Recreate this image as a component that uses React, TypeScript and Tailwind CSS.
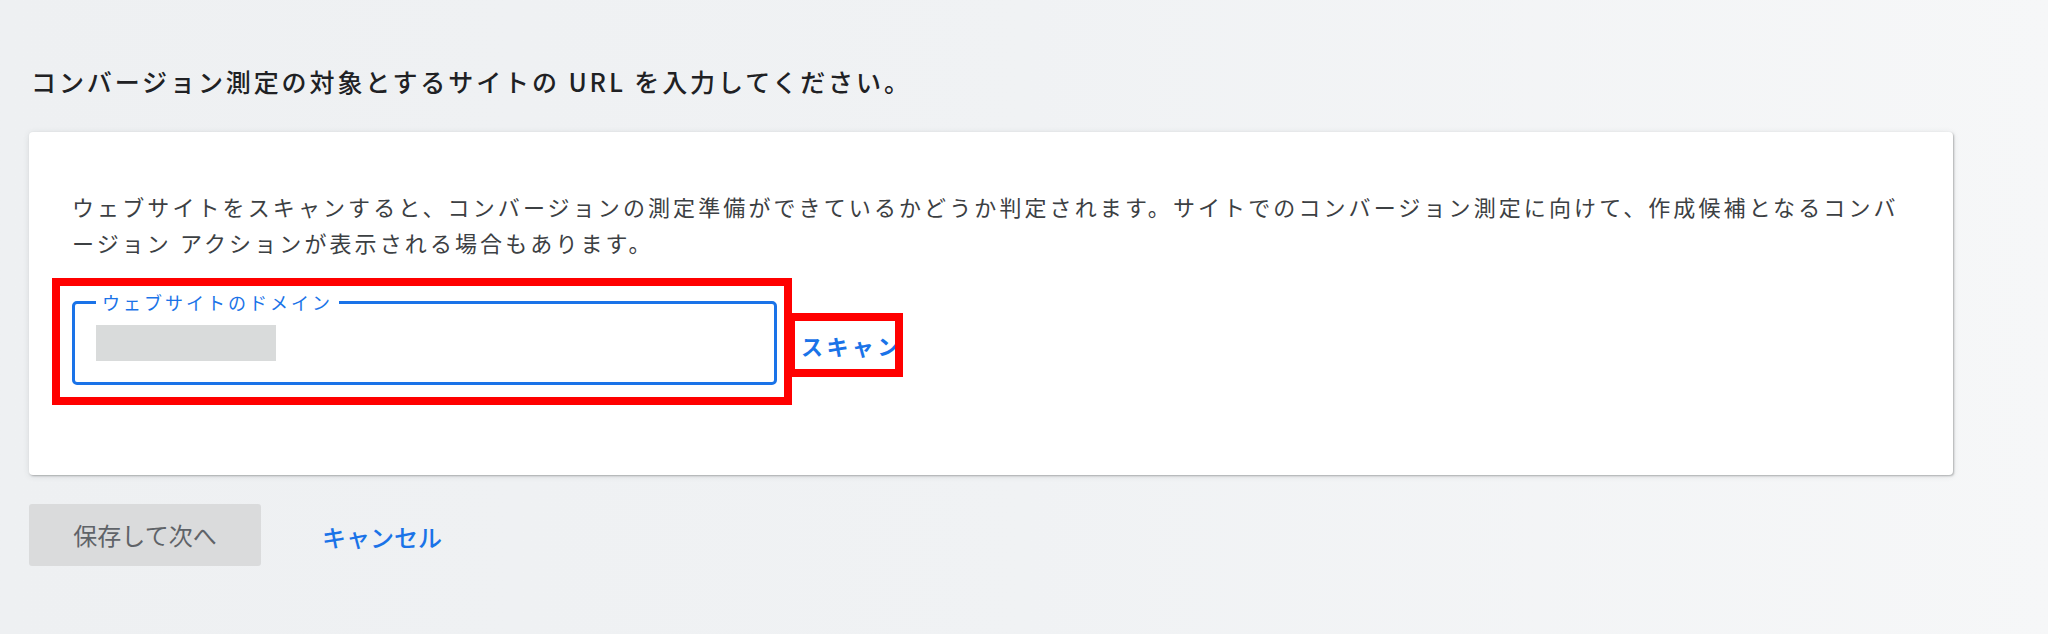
import React from "react";

export default function App() {
  return (
    <div className="w-[2048px] h-[634px] overflow-hidden bg-gradient-to-r from-[#eef0f2] via-[#f0f2f4] to-[#f6f7f8] font-['Noto_Sans_CJK_JP','Noto_Sans',sans-serif]">
      <div className="pl-[29px] pt-[65px]">
        <h1 className="ml-[2px] h-[32px] text-[25px] leading-[32px] font-medium tracking-[2.9px] text-[#202124] whitespace-nowrap">
          コンバージョン測定の対象とするサイトの URL を入力してください。
        </h1>

        <div className="mt-[35px] w-[1924px] h-[343px] rounded-[4px] bg-white shadow-[1px_1px_2px_rgba(60,64,67,0.35),0_1px_6px_rgba(60,64,67,0.12)] px-[23px] pt-[56px]">
          <p className="pl-[20px] text-[22px] leading-[36px] tracking-[3.1px] text-[#3c4043] whitespace-nowrap">
            ウェブサイトをスキャンすると、コンバージョンの測定準備ができているかどうか判定されます。サイトでのコンバージョン測定に向けて、作成候補となるコンバ
            <br />
            ージョン アクションが表示される場合もあります。
          </p>

          <div className="mt-[18px] flex items-start">
            <div className="w-[740px] h-[127px] border-[8px] border-[#ff0000] pl-[12px] pt-[7px]">
              <fieldset className="w-[705px] h-[92px] rounded-[5px] border-[3px] border-[#1a73e8] pl-[21px] pr-[6px] m-0">
                <legend className="px-[6px] text-[18px] leading-[18px] tracking-[3px] text-[#1a73e8] whitespace-nowrap">
                  ウェブサイトのドメイン
                </legend>
                <div className="mt-[14px] w-[180px] h-[36px] bg-[#d9dbdb]" />
              </fieldset>
            </div>
            <div className="-ml-[5px] mt-[35px] w-[116px] h-[64px] border-[8px] border-[#ff0000] overflow-hidden flex items-center pl-[6px]">
              <span className="text-[22px] leading-[26px] font-semibold tracking-[3.4px] text-[#1a73e8] whitespace-nowrap">
                スキャン
              </span>
            </div>
          </div>
        </div>

        <div className="mt-[29px] flex items-center">
          <div className="w-[232px] h-[62px] rounded-[3px] bg-[#dadbdc] flex items-center justify-center text-[24px] leading-[30px] text-[#5f6368]">
            保存して次へ
          </div>
          <div className="ml-[61px] mt-[3px] text-[24px] leading-[30px] font-medium text-[#1a73e8]">キャンセル</div>
        </div>
      </div>
    </div>
  );
}
